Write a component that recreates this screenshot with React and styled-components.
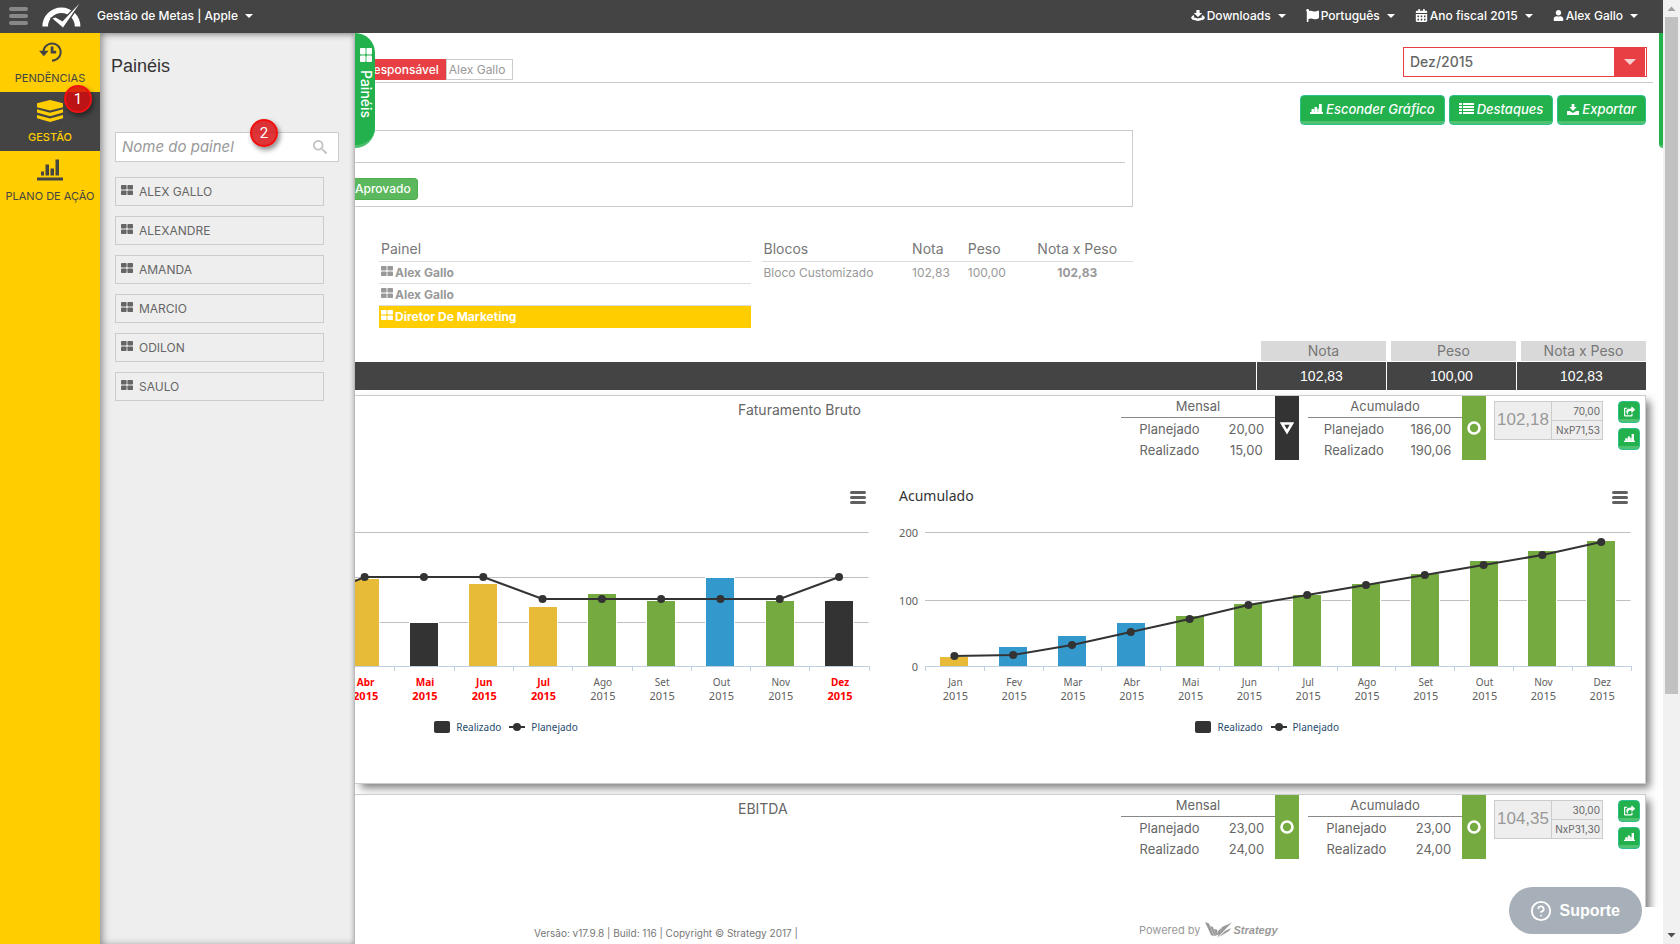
import React from "react";
import styled, { createGlobalStyle, css } from "styled-components";
import { ImHistory, ImSearch } from "react-icons/im";
import { FaFlag, FaCalendarAlt, FaUser, FaShareSquare } from "react-icons/fa";
import { FiHelpCircle } from "react-icons/fi";

const sans = `Inter, "Open Sans", sans-serif`;
const heading = `"Liberation Sans", Roboto, sans-serif`;
const chartFont = `"Noto Sans", "Open Sans", sans-serif`;

const Global = createGlobalStyle`
  *, *::before, *::after { box-sizing: border-box; }
  body { margin: 0; background: #fff; color: #666; font: 13px/20px ${sans}; }
  button, input, select { font: inherit; color: inherit; margin: 0; }
  button { cursor: pointer; }
  a { color: inherit; text-decoration: none; }
  ul { list-style: none; margin: 0; padding: 0; }
  h1, h2, h3 { margin: 0; font-weight: 400; }
  table { border-collapse: collapse; }
  svg { display: block; flex: none; }
`;

const Shell = styled.div`
  display: flex;
  height: 100vh;
  overflow: hidden;
`;
const Page = styled.div`
  flex: 1;
  min-width: 0;
  display: flex;
  flex-direction: column;
`;

/* Top bar */
const TopBar = styled.header`
  display: flex;
  align-items: center;
  flex: none;
  height: 33px;
  padding: 0 25px 2px 9px;
  background: #444;
  color: #fff;
  font-size: 12px;
  font-weight: 500;
`;
const BurgerButton = styled.button`
  border: 0;
  padding: 0;
  background: none;
  display: grid;
  gap: ${(p) => (p.$small ? 2 : 3)}px;
  width: ${(p) => (p.$small ? 16 : 19)}px;
  color: ${(p) => (p.$small ? "#606060" : "#888")};
  span {
    height: ${(p) => (p.$small ? 3 : 4)}px;
    border-radius: 2px;
    background: currentColor;
  }
`;
const LogoLink = styled.a`
  margin: 0 15px 0 14px;
`;
const MenuButton = styled.button`
  display: flex;
  align-items: center;
  gap: 2px;
  border: 0;
  padding: 0;
  background: none;
  white-space: nowrap;
`;
const Caret = styled.i`
  margin-left: 5px;
  border: 4px solid transparent;
  border-top-color: currentColor;
  border-bottom: 0;
`;
const TopMenu = styled.nav`
  display: flex;
  gap: 20px;
  margin-left: auto;
`;

/* Side navigation */
const Body = styled.div`
  flex: 1;
  min-height: 0;
  display: flex;
`;
const SideNav = styled.nav`
  flex: none;
  width: 100px;
  background: #ffcd00;
`;
const SideLink = styled.a`
  display: flex;
  flex-direction: column;
  align-items: center;
  height: 59px;
  padding-top: 8px;
  gap: 5px;
  font-size: 11px;
  line-height: 20px;
  white-space: nowrap;
  position: relative;
  color: ${(p) => (p.$active ? "#ffcd00" : "#444")};
  background: ${(p) => (p.$active ? "#444" : "transparent")};
  font-weight: ${(p) => (p.$active ? 500 : 400)};
  > svg { height: 22px; overflow: visible; }
`;
const Badge = styled.span`
  position: absolute;
  top: ${(p) => p.$top};
  right: ${(p) => p.$right};
  z-index: 3;
  width: 28px;
  height: 28px;
  border: 2px solid #f01010;
  border-radius: 50%;
  background: rgba(214, 8, 12, 0.82);
  box-shadow: 2px 3px 5px rgba(0, 0, 0, 0.45);
  color: #fff;
  font: 400 15px/24px Roboto, sans-serif;
  text-align: center;
`;

/* Drawer with the list of panels */
const Drawer = styled.aside`
  flex: none;
  width: 255px;
  padding: 19px 15px 0;
  background: #eee;
  border-right: 1px solid #bbb;
  box-shadow: inset 4px 0 8px -2px #888, inset 0 4px 6px -3px #999, inset -3px 0 4px -2px #ccc;
`;
const DrawerTitle = styled.h1`
  margin: 0 0 52px -4px;
  color: #333;
  font: 400 18px/28px ${heading};
`;
const SearchField = styled.label`
  position: relative;
  display: flex;
  align-items: center;
  height: 30px;
  margin-bottom: 15px;
  padding: 0 11px 0 6px;
  border: 1px solid #ccc;
  background: #fff;
  color: #c4c4c4;
  input {
    flex: 1;
    min-width: 0;
    border: 0;
    padding: 0;
    outline: 0;
    background: none;
    color: #666;
    font-size: 15px;
    font-style: italic;
  }
  input::placeholder { color: #999; opacity: 1; }
`;
const PanelList = styled.ul`
  display: grid;
  gap: 10px;
  margin-right: 15px;
`;
const PanelLink = styled.a`
  display: flex;
  align-items: center;
  gap: 6px;
  height: 29px;
  padding: 0 5px;
  border: 1px solid #ccc;
  font-size: 12px;
  svg { margin-bottom: 4px; }
`;

/* Content */
const Main = styled.main`
  position: relative;
  flex: 1;
  min-width: 0;
  display: flex;
  flex-direction: column;
  background: #fff;
`;
const DrawerTab = styled.button`
  position: absolute;
  z-index: 2;
  top: 0;
  left: 0;
  display: flex;
  align-items: center;
  gap: 8px;
  width: 20px;
  height: 115px;
  padding: 15px 0 0 2px;
  border: 0;
  border-bottom: 3px solid #4cc06f;
  border-radius: 0 20px 20px 0;
  background: #22b14c;
  color: #fff;
  font-size: 14px;
  font-weight: 500;
  writing-mode: vertical-rl;
`;
const RightTab = styled.button`
  position: absolute;
  top: 0;
  right: 0;
  width: 4px;
  height: 115px;
  padding: 0;
  border: 0;
  border-bottom: 3px solid #4cc06f;
  border-radius: 0 0 0 4px;
  background: #22b14c;
`;
const Scroll = styled.div`
  flex: 1;
  min-height: 0;
  overflow: hidden auto;
  scrollbar-width: none;
`;
const OwnerRow = styled.div`
  display: flex;
  align-items: flex-end;
  justify-content: space-between;
  height: 50px;
  margin-right: 10px;
  padding: 0 6px 2px 0;
  border-bottom: 1px solid #ccc;
`;
const Owner = styled.div`
  display: flex;
  font-size: 12px;
  line-height: 19px;
  b {
    padding: 1px 7px 1px 11px;
    background: #e83f45;
    color: #fff;
    font-weight: 500;
  }
  span {
    padding: 0 7px 0 2px;
    border: 1px solid #ccc;
    color: #999;
  }
`;
const MonthSelect = styled.label`
  position: relative;
  display: flex;
  width: 244px;
  height: 30px;
  margin-bottom: 3px;
  border: 1px solid #e83f45;
  select {
    flex: 1;
    appearance: none;
    border: 0;
    padding: 0 6px;
    background: #fff;
    font-size: 14px;
    font-weight: 500;
  }
  span {
    display: grid;
    place-items: center;
    width: 31px;
    background: #e83f45;
    margin-right: 1px;
    color: #f9d0d2;
    pointer-events: none;
  }
  i {
    border: 6px solid transparent;
    border-top-color: currentColor;
    border-bottom: 0;
  }
`;
const Actions = styled.div`
  display: flex;
  justify-content: flex-end;
  gap: 4px;
  padding: 12px 17px 5px 0;
`;
const green = css`
  border: 1px solid #2dc08c;
  background: linear-gradient(to top, #4fc272 3px, #22b14c 3px);
  color: #fff;
`;
const ActionButton = styled.button`
  ${green}
  display: flex;
  align-items: center;
  gap: 3px;
  height: 30px;
  padding: 0 9px 2px;
  border-radius: 4px;
  font-style: italic;
  font-weight: 500;
`;
const Overview = styled.div`
  display: grid;
  grid-template-columns: 778fr 530fr;
`;
const StatusBox = styled.div`
  border: 1px solid #ccc;
  border-left: 0;
  padding-bottom: 6px;
`;
const StatusLine = styled.div`
  height: 32px;
  margin: 0 7px 15px 0;
  border-bottom: 1px solid #ccc;
`;
const StatusTag = styled.span`
  display: inline-block;
  vertical-align: top;
  padding: 0 6px 0 0;
  border: 1px solid #4cae4c;
  border-left: 0;
  border-radius: 0 4px 4px 0;
  background: #5cb85c;
  color: #fff;
  font-size: 12px;
  font-weight: 500;
`;
const Tables = styled.div`
  display: grid;
  grid-template-columns: 1fr 1fr;
  gap: 11px;
  align-items: start;
  padding: 30px 0 13px 24px;
`;
const DataTable = styled.table`
  width: 100%;
  table-layout: fixed;
  border-collapse: separate;
  border-spacing: 0;
  color: #999;
  font-size: 12px;
  th, td {
    height: 22px;
    padding: 0 2px;
    border-bottom: 1px solid #ddd;
    line-height: 20px;
    text-align: left;
    white-space: nowrap;
  }
  th {
    height: 25px;
    color: #777;
    font-size: 14px;
    font-weight: 400;
  }
  tr:last-child td { border-bottom-color: transparent; }
  .center { text-align: center; }
`;
const PanelRow = styled.tr`
  background: ${(p) => (p.$active ? "#ffcd00" : "transparent")};
  color: ${(p) => (p.$active ? "#fff" : "inherit")};
  a {
    display: flex;
    align-items: center;
    gap: 2px;
    font-weight: 700;
  }
  svg { margin-bottom: 4px; }
`;
const SummaryHead = styled.div`
  display: grid;
  grid-template-columns: repeat(3, 125px);
  justify-content: end;
  gap: 5px;
  padding: 0 17px 1px 0;
  color: #777;
  font-size: 14px;
  text-align: center;
  span { background: #d9d9d9; }
`;
const SummaryBar = styled.div`
  display: grid;
  grid-template-columns: 1fr repeat(3, 129px);
  gap: 1px;
  margin: 0 17px 5px 0;
  color: #fff;
  font: 400 14px/28px ${heading};
  text-align: center;
  span { background: #444; min-height: 28px; }
`;

/* Indicator cards */
const Card = styled.section`
  min-height: 389px;
  margin: 0 17px 10px 0;
  border: 1px solid #ccc;
  border-left: 0;
  background: #fff;
  box-shadow: 5px 5px 8px -1px rgba(0, 0, 0, 0.5);
`;
const CardHead = styled.div`
  display: flex;
  align-items: flex-start;
`;
const CardTitle = styled.h2`
  flex: 1;
  display: grid;
  grid-template-columns: 1fr 1fr;
  padding-top: 4px;
  font-size: 14px;
  line-height: 20px;
  &::before { content: ""; }
`;
const Metric = styled.table`
  width: 154px;
  text-align: center;
  caption { height: 22px; border-bottom: 1px solid #888; }
  th, td { padding: 0; height: 21px; font-weight: 400; text-align: center; }
`;
const Marker = styled.span`
  display: grid;
  place-items: center;
  width: 24px;
  height: 64px;
  margin-right: ${(p) => p.$gap}px;
  background: ${(p) => p.$color};
`;
const Score = styled.div`
  display: grid;
  grid-template-columns: 1fr 50px;
  width: 109px;
  height: 39px;
  margin-top: 5px;
  border: 1px solid #ccc;
  background: #eee;
  strong {
    grid-row: span 2;
    border-right: 1px solid #ccc;
    color: #999;
    font: 400 17px/36px ${heading};
    text-align: center;
  }
  span {
    padding-right: 2px;
    font-size: 10px;
    line-height: 18px;
    text-align: right;
  }
  strong + span { border-bottom: 1px solid #ccc; }
`;
const CardButtons = styled.div`
  display: grid;
  gap: 5px;
  margin: 5px 5px 0 15px;
`;
const IconButton = styled.button`
  ${green}
  display: grid;
  place-items: center;
  width: 22px;
  height: 22px;
  padding: 0 0 2px;
  border-radius: 4px;
`;
const Charts = styled.div`
  display: grid;
  grid-template-columns: 528fr 762fr;
  font-family: ${chartFont};
  > figure > svg { width: 100%; height: auto; }
`;
const ChartBox = styled.figure`
  margin: 0;
  min-width: 0;
`;
const ChartHead = styled.div`
  display: flex;
  align-items: flex-end;
  justify-content: space-between;
  height: 52px;
  padding: 0 17px 8px 16px;
  color: #333;
  h3 { font-size: 14px; line-height: 16px; }
  button { margin-left: auto; }
`;
const Legend = styled.figcaption`
  display: flex;
  align-items: center;
  gap: 8px;
  height: 38px;
  padding-left: ${(p) => p.$start};
  color: #274b6d;
  font-size: 10px;
  span { display: flex; align-items: center; gap: 6px; }
`;

/* Footer, support, page scroll bar */
const Footer = styled.footer`
  flex: none;
  display: grid;
  grid-template-columns: 179fr 605fr 524fr;
  align-items: center;
  height: 37px;
  padding-top: 9px;
  color: #777;
  font-size: 10px;
  > p { grid-column: 2; margin: 0; padding-top: 6px; }
`;
const Powered = styled.a`
  display: flex;
  align-items: center;
  gap: 5px;
  color: #999;
  font-size: 11px;
  svg { margin-right: -4px; }
  b { font: italic 700 11px/16px ${heading}; }
`;
const Support = styled.button`
  position: absolute;
  z-index: 3;
  right: 21px;
  bottom: 10px;
  display: flex;
  align-items: center;
  gap: 8px;
  height: 47px;
  padding: 0 22px 0 21px;
  border: 0;
  border-radius: 24px;
  background: #a7b0b8;
  color: #fff;
  font: 700 16px/20px "Liberation Sans", sans-serif;
`;
const ScrollRail = styled.div`
  flex: none;
  display: flex;
  flex-direction: column;
  align-items: center;
  width: 17px;
  background: #f1f1f1;
  i { flex: 677; width: 13px; background: #c1c1c1; }
  &::after { content: ""; flex: 233; order: 1; }
  svg:last-of-type { order: 2; }
`;

const Squares = ({ w = 12, h = 10 }) => (
  <svg width={w} height={h} viewBox="0 0 12 10" preserveAspectRatio="none" fill="currentColor" aria-hidden="true">
    <rect width="5.6" height="4.6" rx="0.8" />
    <rect x="6.4" width="5.6" height="4.6" rx="0.8" />
    <rect y="5.4" width="5.6" height="4.6" rx="0.8" />
    <rect x="6.4" y="5.4" width="5.6" height="4.6" rx="0.8" />
  </svg>
);
const Logo = () => (
  <svg width="40" height="26" viewBox="0 0 40 26" aria-hidden="true">
    <path d="M3.200 23.500a16.200 16.200 0 0 1 32.400 0" fill="none" stroke="#fff" strokeWidth="5.600" />
    <path d="M10.500 15.500L14 14.500L20.500 18.500L37.500 0.500L21 25z" fill="#444" stroke="#444" strokeWidth="2.600" />
    <path d="M10.500 15.500L13.500 14.500L20.500 18.500L37.500 0.500L21 24.500z" fill="#fff" />
  </svg>
);
const Layers = () => (
  <svg width="26" height="22" viewBox="0 0 26 22" fill="currentColor" aria-hidden="true">
    <path d="M0 3.200L13 0l13 3.200v4L13 10.500L0 7.200z" />
    <path d="M0 9.300l13 3.400l13-3.400v3.200l-13 3.700l-13-3.700z" />
    <path d="M0 15l13 3.400L26 15v3.200L13 22L0 18.200z" />
  </svg>
);
const Bars = () => (
  <svg width="26" height="21" viewBox="0 0 26 21" fill="currentColor" aria-hidden="true">
    <path d="M0 18h26v3H0zM4 12h3v4H4zM8.500 5h3.500v11H8.500zM13.500 9H17v7h-3.500zM18.500 0H22v16h-3.500z" />
  </svg>
);
const SmallBars = ({ size = 13 }) => (
  <svg width={size} height={size * 10 / 13} viewBox="0 0 13 10" fill="currentColor" aria-hidden="true">
    <path d="M0 8h13v2H0zM1.500 5h2.700v3H1.500zM4.500 3H7v5H4.500zM7.300 4.500h1.500V8H7.300zM9 0h2.800v8H9z" />
  </svg>
);
const Tray = ({ wide }) => (
  <svg width={wide ? 14 : 12} height="11" viewBox="0 0 13 11" preserveAspectRatio="none" fill="currentColor" aria-hidden="true">
    <path d="M5 0h3v3h2.500L6.500 7L2.500 3H5z" />
    <path d={wide ? "M2 5L0 7.500L1 9.500L6.500 11L12 9.500L13 7.500L11 5l-1.200 1.200l1 1L6.500 8.500L2.200 7.200l1-1z" : "M0 7h3l3.500 2L10 7h3v4H0z"} />
  </svg>
);
const Lines = () => (
  <svg width="15" height="12" viewBox="0 0 15 12" fill="currentColor" aria-hidden="true">
    {[0, 3, 6, 9].map((y) => (
      <path key={y} d={`M0 ${y}h3v2H0zM4 ${y}h11v2H4z`} />
    ))}
  </svg>
);
const StrategyMark = () => (
  <svg width="27" height="16" viewBox="0 0 27 16" fill="#999" aria-hidden="true">
    <path d="M0 0l4 1.500l5 13l-3-1.500z" />
    <path d="M5 4l3 1l3 9l-2-.500zM9 7l3 .500l1 5l-2 1zM13 9l3-3l-1 6l-2 1z" />
    <path d="M17 5l10-4.500l-3 3L12 16l3-6z" />
    <path d="M20 9l6-3l-2 3l-10 6z" />
  </svg>
);
const ShapeIcon = ({ down }) => (
  <svg width="14" height="14" viewBox="0 0 14 14" fill="none" stroke="#fff" strokeWidth="2.600" aria-hidden="true">
    {down ? <path d="M2 2.500h10L7 11z" /> : <circle cx="7" cy="7" r="5.500" />}
  </svg>
);

const GREEN = "#74aa3f";
const DARK = "#333";
const YELLOW = "#e7ba37";
const BLUE = "#3399cc";

/* bar: bar height, line: marker height, both measured up from the axis */
const monthly = [
  { m: "Abr", bar: 87, line: 89, color: YELLOW, late: true },
  { m: "Mai", bar: 43, line: 89, color: DARK, late: true },
  { m: "Jun", bar: 82, line: 89, color: YELLOW, late: true },
  { m: "Jul", bar: 59, line: 67, color: YELLOW, late: true },
  { m: "Ago", bar: 72, line: 67, color: GREEN },
  { m: "Set", bar: 65, line: 67, color: GREEN },
  { m: "Out", bar: 88, line: 67, color: BLUE },
  { m: "Nov", bar: 65, line: 67, color: GREEN },
  { m: "Dez", bar: 65, line: 89, color: DARK, late: true },
];
const accumulated = [
  { m: "Jan", bar: 9, line: 10, color: YELLOW },
  { m: "Fev", bar: 19, line: 11, color: BLUE },
  { m: "Mar", bar: 30, line: 21, color: BLUE },
  { m: "Abr", bar: 43, line: 34, color: BLUE },
  { m: "Mai", bar: 50, line: 47, color: GREEN },
  { m: "Jun", bar: 62, line: 61, color: GREEN },
  { m: "Jul", bar: 71, line: 71, color: GREEN },
  { m: "Ago", bar: 82, line: 81, color: GREEN },
  { m: "Set", bar: 92, line: 91, color: GREEN },
  { m: "Out", bar: 105, line: 101, color: GREEN },
  { m: "Nov", bar: 115, line: 111, color: GREEN },
  { m: "Dez", bar: 125, line: 124, color: GREEN },
];

function Chart({ title, width, left, step, data, grid, legendStart }) {
  const axis = 154;
  const right = left + step * data.length;
  const centre = (i) => left + step * (i + 0.5);
  return (
    <ChartBox>
      <ChartHead>
        {title && <h3>{title}</h3>}
        <BurgerButton $small aria-label="Menu do gráfico">
          <span /><span /><span />
        </BurgerButton>
      </ChartHead>
      <svg viewBox={`0 0 ${width} 196`} fontSize="10" textAnchor="middle">
        {grid.map((g) => (
          <g key={g.y}>
            <path d={`M${Math.max(left, 0)} ${g.y + 0.5}H${right}`} stroke="#c0c0c0" />
            {g.label && <text x={left - 7} y={g.y + 5} fontSize="11" textAnchor="end" fill="#606060">{g.label}</text>}
          </g>
        ))}
        {data.map((d, i) => (
          <rect key={d.m} x={Math.round(centre(i)) - 14.5} y={axis - d.bar - 0.5} width="29" height={d.bar + 1} fill={d.color} stroke="#fff" />
        ))}
        <path d={`M${Math.max(left, 0)} ${axis + 0.5}H${right}`} stroke="#c0d0e0" />
        {[...data, null].map((d, i) => (
          <path key={i} d={`M${Math.round(left + step * i) + 0.5} ${axis}v5`} stroke="#c0d0e0" />
        ))}
        {grid[0].lead && <path d={`M0 ${axis - grid[0].lead}L${centre(0)} ${axis - data[0].line}`} stroke={DARK} strokeWidth="2" />}
        <polyline points={data.map((d, i) => `${centre(i)},${axis - d.line}`).join(" ")} fill="none" stroke={DARK} strokeWidth="2" />
        {data.map((d, i) => (
          <circle key={d.m} cx={centre(i)} cy={axis - d.line} r="4" fill={DARK} />
        ))}
        {data.map((d, i) => (
          <g key={d.m} fill={d.late ? "#f00" : "#606060"} fontWeight={d.late ? 700 : 400}>
            <text x={centre(i) + 1} y="174">{d.m}</text>
            <text x={centre(i) + 1} y="188" fontSize="11">2015</text>
          </g>
        ))}
      </svg>
      <Legend $start={legendStart}>
        <span>
          <svg width="16" height="12" aria-hidden="true"><rect width="16" height="12" rx="2" fill={DARK} /></svg>
          Realizado
        </span>
        <span>
          <svg width="16" height="8" aria-hidden="true"><path d="M0 4h16" stroke={DARK} strokeWidth="2" /><circle cx="8" cy="4" r="4" fill={DARK} /></svg>
          Planejado
        </span>
      </Legend>
    </ChartBox>
  );
}

function MetricBlock({ name, planned, actual, down, gap }) {
  return (
    <>
      <Metric>
        <caption>{name}</caption>
        <tbody>
          <tr><th scope="row">Planejado</th><td>{planned}</td></tr>
          <tr><th scope="row">Realizado</th><td>{actual}</td></tr>
        </tbody>
      </Metric>
      <Marker $gap={gap} $color={down ? DARK : GREEN}><ShapeIcon down={down} /></Marker>
    </>
  );
}

function Indicator({ title, month, total, score, weight, nxp, children }) {
  return (
    <Card>
      <CardHead>
        <CardTitle>{title}</CardTitle>
        <MetricBlock name="Mensal" {...month} gap={9} />
        <MetricBlock name="Acumulado" {...total} gap={8} />
        <Score>
          <strong>{score}</strong>
          <span>{weight}</span>
          <span>{nxp}</span>
        </Score>
        <CardButtons>
          <IconButton aria-label="Compartilhar"><FaShareSquare size={11} /></IconButton>
          <IconButton aria-label="Gráfico"><SmallBars size={11} /></IconButton>
        </CardButtons>
      </CardHead>
      {children}
    </Card>
  );
}

const panels = ["ALEX GALLO", "ALEXANDRE", "AMANDA", "MARCIO", "ODILON", "SAULO"];

export default function App() {
  return (
    <Shell>
      <Global />
      <Page>
        <TopBar>
          <BurgerButton aria-label="Menu"><span /><span /><span /></BurgerButton>
          <LogoLink href="#" aria-label="Início"><Logo /></LogoLink>
          <MenuButton>Gestão de Metas | Apple<Caret /></MenuButton>
          <TopMenu>
            <MenuButton><Tray wide />Downloads<Caret /></MenuButton>
            <MenuButton><FaFlag size={13} />Português<Caret /></MenuButton>
            <MenuButton><FaCalendarAlt size={13} />Ano fiscal 2015<Caret /></MenuButton>
            <MenuButton><FaUser size={11} />Alex Gallo<Caret /></MenuButton>
          </TopMenu>
        </TopBar>
        <Body>
          <SideNav>
            <SideLink href="#"><ImHistory size={26} />PENDÊNCIAS</SideLink>
            <SideLink href="#" $active>
              <Layers />GESTÃO<Badge $top="-7px" $right="8px">1</Badge>
            </SideLink>
            <SideLink href="#"><Bars />PLANO DE AÇÃO</SideLink>
          </SideNav>
          <Drawer>
            <DrawerTitle>Painéis</DrawerTitle>
            <SearchField>
              <input placeholder="Nome do painel" aria-label="Nome do painel" />
              <ImSearch size={14} />
              <Badge $top="-14px" $right="60px">2</Badge>
            </SearchField>
            <PanelList>
              {panels.map((p) => (
                <li key={p}><PanelLink href="#"><Squares />{p}</PanelLink></li>
              ))}
            </PanelList>
          </Drawer>
          <Main>
            <DrawerTab><Squares w={12} h={14} />Painéis</DrawerTab>
            <RightTab aria-label="Abrir painel lateral" />
            <Scroll>
              <OwnerRow>
                <Owner><b>Responsável</b><span>Alex Gallo</span></Owner>
                <MonthSelect>
                  <select aria-label="Mês" defaultValue="Dez/2015"><option>Dez/2015</option></select>
                  <span><i /></span>
                </MonthSelect>
              </OwnerRow>
              <Actions>
                <ActionButton><SmallBars />Esconder Gráfico</ActionButton>
                <ActionButton><Lines />Destaques</ActionButton>
                <ActionButton><Tray />Exportar</ActionButton>
              </Actions>
              <Overview>
                <div>
                  <StatusBox>
                    <StatusLine />
                    <StatusTag>Aprovado</StatusTag>
                  </StatusBox>
                  <Tables>
                    <DataTable>
                      <thead><tr><th>Painel</th></tr></thead>
                      <tbody>
                        <PanelRow><td><a href="#"><Squares />Alex Gallo</a></td></PanelRow>
                        <PanelRow><td><a href="#"><Squares />Alex Gallo</a></td></PanelRow>
                        <PanelRow $active><td><a href="#"><Squares />Diretor De Marketing</a></td></PanelRow>
                      </tbody>
                    </DataTable>
                    <DataTable>
                      <colgroup><col width="40%" /><col width="15%" /><col width="15%" /><col width="30%" /></colgroup>
                      <thead><tr><th>Blocos</th><th>Nota</th><th>Peso</th><th className="center">Nota x Peso</th></tr></thead>
                      <tbody>
                        <tr><td>Bloco Customizado</td><td>102,83</td><td>100,00</td><td className="center"><b>102,83</b></td></tr>
                      </tbody>
                    </DataTable>
                  </Tables>
                </div>
              </Overview>
              <SummaryHead><span>Nota</span><span>Peso</span><span>Nota x Peso</span></SummaryHead>
              <SummaryBar><span /><span>102,83</span><span>100,00</span><span>102,83</span></SummaryBar>
              <Indicator
                title="Faturamento Bruto"
                month={{ planned: "20,00", actual: "15,00", down: true }}
                total={{ planned: "186,00", actual: "190,06" }}
                score="102,18" weight="70,00" nxp="NxP71,53"
              >
                <Charts>
                  <Chart
                    width={528} left={-20} step={59.3} data={monthly} legendStart="15%"
                    grid={[{ y: 20, lead: 85 }, { y: 65 }, { y: 110 }]}
                  />
                  <Chart
                    title="Acumulado" width={762} left={42} step={58.8} data={accumulated} legendStart="41%"
                    grid={[{ y: 20, label: "200" }, { y: 88, label: "100" }, { y: 154, label: "0" }]}
                  />
                </Charts>
              </Indicator>
              <Indicator
                title="EBITDA"
                month={{ planned: "23,00", actual: "24,00" }}
                total={{ planned: "23,00", actual: "24,00" }}
                score="104,35" weight="30,00" nxp="NxP31,30"
              />
            </Scroll>
            <Footer>
              <p>Versão: v17.9.8 | Build: 116 | Copyright © Strategy 2017 |</p>
              <Powered href="#">Powered by <StrategyMark /><b>Strategy</b></Powered>
            </Footer>
            <Support><FiHelpCircle size={22} />Suporte</Support>
          </Main>
        </Body>
      </Page>
      <ScrollRail aria-hidden="true">
        <svg width="17" height="17" viewBox="0 0 17 17"><path d="M4.500 11h8l-4-4.500z" fill="#a3a3a3" /></svg>
        <i />
        <svg width="17" height="17" viewBox="0 0 17 17"><path d="M4.500 6h8l-4 4.500z" fill="#505050" /></svg>
      </ScrollRail>
    </Shell>
  );
}
